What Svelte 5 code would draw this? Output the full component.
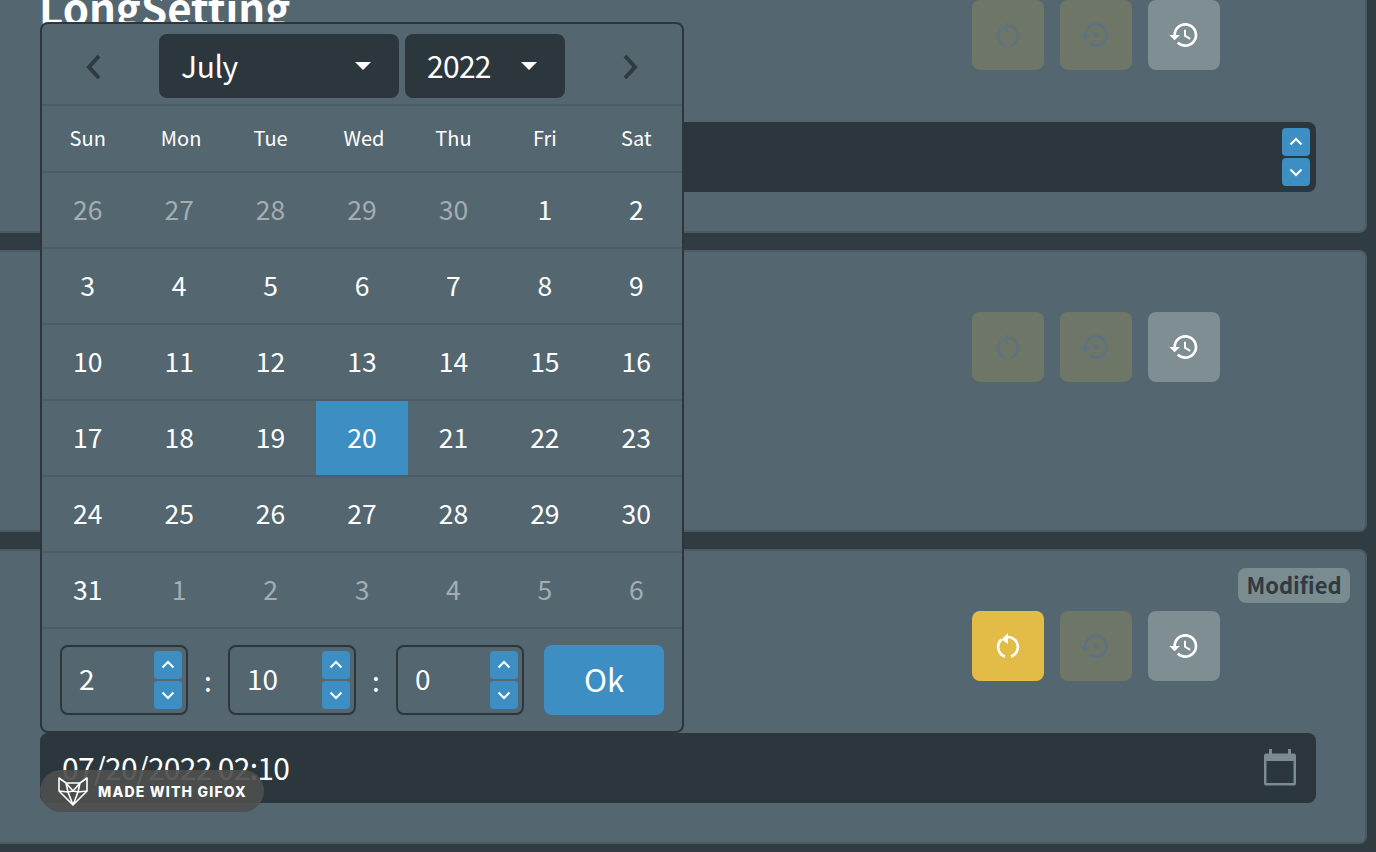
<script lang="ts">
	const weekdays = ['Sun', 'Mon', 'Tue', 'Wed', 'Thu', 'Fri', 'Sat'];

	// muted = day of a neighbouring month
	const days = [
		...[26, 27, 28, 29, 30].map((d) => ({ d, muted: true })),
		...Array.from({ length: 31 }, (_, i) => ({ d: i + 1, muted: false })),
		...[1, 2, 3, 4, 5, 6].map((d) => ({ d, muted: true }))
	];

	const time = [2, 10, 0];

	const restore = 'M14 12c0-1.1-.9-2-2-2s-2 .9-2 2 .9 2 2 2 2-.9 2-2zm-2-9c-4.97 0-9 4.03-9 9H0l4 4 4-4H5c0-3.87 3.13-7 7-7s7 3.13 7 7-3.13 7-7 7c-1.51 0-2.91-.49-4.06-1.3l-1.42 1.44C8.04 20.3 9.94 21 12 21c4.97 0 9-4.03 9-9s-4.03-9-9-9z';
	const history = 'M13 3c-4.97 0-9 4.03-9 9H1l3.89 3.89.07.14L9 12H6c0-3.87 3.13-7 7-7s7 3.13 7 7-3.13 7-7 7c-1.93 0-3.68-.79-4.94-2.06l-1.42 1.42C8.27 19.99 10.51 21 13 21c4.97 0 9-4.03 9-9s-4.03-9-9-9zm-1 5v5l4.28 2.54.72-1.21-3.5-2.08V8H12z';
</script>

{#snippet actions(modified: boolean)}
	<div class="actions">
		<button class="act" class:off={!modified} class:reset={modified}>
			<svg viewBox="0 0 32 32" width="32" height="32">
				<path d="M16 3 9.7 9.5 16 14z" />
				<path class="arc" d="M16 7a10 10 0 0 1 3 19.5M9.5 9.5A10 10 0 0 0 13 26.5" />
			</svg>
		</button>
		<button class="act off">
			<svg viewBox="0 0 24 24" width="32" height="32"><path d={restore} /></svg>
		</button>
		<button class="act hist">
			<svg viewBox="0 0 24 24" width="32" height="32"><path d={history} /></svg>
		</button>
	</div>
{/snippet}

{#snippet spin()}
	<div class="spin">
		<button aria-label="up"><svg viewBox="0 0 16 16" width="16" height="16"><path d="M2.5 10.5 8 5l5.5 5.5" /></svg></button>
		<button aria-label="down"><svg viewBox="0 0 16 16" width="16" height="16"><path d="M2.5 5.5 8 11l5.5-5.5" /></svg></button>
	</div>
{/snippet}

<div class="page">
	<section class="card">
		<div class="head">
			<h2>LongSetting</h2>
			{@render actions(false)}
		</div>
		<div class="field">{@render spin()}</div>
	</section>

	<section class="card short">
		<div class="head">
			<span></span>
			{@render actions(false)}
		</div>
	</section>

	<section class="card">
		<span class="badge">Modified</span>
		<div class="head">
			<span></span>
			{@render actions(true)}
		</div>
		<div class="field">
			<span class="value">07/20/2022 02:10</span>
			<svg class="cal" viewBox="0 0 34 38" width="34" height="38">
				<path d="M1 6.5q0-2 2-2h28q2 0 2 2v28q0 2-2 2H3q-2 0-2-2zM3.5 12v22h27V12z" fill-rule="evenodd" />
				<rect x="6" y="0" width="3" height="6" /><rect x="25" y="0" width="3" height="6" />
			</svg>
		</div>
	</section>

	<div class="picker">
		<div class="top">
			<svg class="nav" viewBox="0 0 18 26" width="18" height="26"><path d="M14 2 4 13l10 11" /></svg>
			<div class="selects">
				<div class="select month">July<i></i></div>
				<div class="select year">2022<i></i></div>
			</div>
			<svg class="nav" viewBox="0 0 18 26" width="18" height="26"><path d="M4 2l10 11L4 24" /></svg>
		</div>
		<div class="weekdays">
			{#each weekdays as w}<span>{w}</span>{/each}
		</div>
		<div class="days">
			{#each days as day}
				<span class:muted={day.muted} class:sel={!day.muted && day.d === 20}>{day.d}</span>
			{/each}
		</div>
		<div class="clock">
			{#each time as t, i}
				{#if i > 0}<span class="colon">:</span>{/if}
				<div class="num"><span class="n">{t}</span>{@render spin()}</div>
			{/each}
			<button class="ok">Ok</button>
		</div>
	</div>

	<div class="gifox">
		<svg viewBox="0 0 32 30" width="32" height="30">
			<path d="M2 2l7 5h14l7-5 0 13-14 14L2 15zM9 7l7 8 7-8M2 15l9 1 5-1 5 1 9-1M11 16l5 13 5-13M9 7l2 9M23 7l-2 9" />
		</svg>
		<span>MADE WITH GIFOX</span>
	</div>
</div>

<style>
	:global(body) {
		background: #303b42;
	}

	.page {
		position: relative;
		height: 852px;
		overflow: hidden;
		display: flex;
		flex-direction: column;
		gap: 17px;
		font-family: 'Noto Sans CJK SC', 'Noto Sans', sans-serif;
		color: #fff;
	}

	.page > :first-child {
		margin-top: -62px;
	}

	.card {
		position: relative;
		flex: none;
		margin: 0 9px 0 -10px;
		padding: 0 49px 41px 50px;
		background: #546670;
		border: solid #4b5b65;
		border-width: 2px 2px 2px 0;
		border-radius: 8px;
		box-sizing: border-box;
		height: 295px;
	}

	.card.short {
		height: 282px;
	}

	.head {
		display: flex;
		justify-content: space-between;
		align-items: flex-start;
		height: 182px;
	}

	h2 {
		margin: 42px 0 0 -1px;
		font-size: 42px;
		line-height: 50px;
		font-weight: 700;
	}

	.actions {
		display: flex;
		gap: 16px;
		margin: 60px 96px 0 0;
	}

	.act {
		width: 72px;
		height: 70px;
		border: 0;
		padding: 0;
		border-radius: 8px;
		display: flex;
		align-items: center;
		justify-content: center;
		color: #fff;
		fill: currentColor;
	}

	.act.off {
		background: #6e7667;
		color: #5f7280;
	}

	.act.reset {
		background: #e3bc47;
	}

	.act.hist {
		background: #7f8e92;
	}

	.arc {
		fill: none;
		stroke: currentColor;
		stroke-width: 2.6;
	}

	.field {
		height: 70px;
		background: #2b373c;
		border-radius: 8px;
		display: flex;
		align-items: center;
		justify-content: space-between;
		padding: 0 19px 0 22px;
		box-sizing: border-box;
	}

	.field .spin {
		margin: 0 -13px 0 auto;
	}

	.value {
		font-size: 30px;
		letter-spacing: -0.7px;
		margin-top: -2px;
	}

	.cal {
		fill: #7b8c90;
	}

	.spin {
		display: flex;
		flex-direction: column;
		gap: 2px;
	}

	.spin button {
		width: 28px;
		height: 28px;
		padding: 0;
		border: 0;
		border-radius: 4px;
		background: #3d8fc3;
		display: flex;
		align-items: center;
		justify-content: center;
	}

	.spin path {
		fill: none;
		stroke: #fff;
		stroke-width: 2;
	}

	.badge {
		position: absolute;
		top: 17px;
		right: 15px;
		width: 112px;
		height: 35px;
		border-radius: 8px;
		background: #7b8c90;
		color: #2f3a41;
		font-size: 22px;
		line-height: 33px;
		font-weight: 700;
		text-align: center;
	}

	.picker {
		position: absolute;
		left: 40px;
		top: 22px;
		width: 644px;
		height: 711px;
		box-sizing: border-box;
		background: #546670;
		border: 2px solid #2c363c;
		border-radius: 8px;
		display: flex;
		flex-direction: column;
	}

	.top {
		height: 82px;
		box-sizing: border-box;
		padding: 10px 43px 0;
		display: flex;
		justify-content: space-between;
		border-bottom: 2px solid #4c5d67;
	}

	.nav {
		margin-top: 20px;
		fill: none;
		stroke: #2f3a41;
		stroke-width: 4;
	}

	.selects {
		display: flex;
		gap: 6px;
	}

	.select {
		height: 64px;
		box-sizing: border-box;
		background: #2b373c;
		border-radius: 8px;
		font-size: 30px;
		letter-spacing: -0.4px;
		line-height: 64px;
		padding: 0 0 2px 22px;
		display: flex;
		justify-content: space-between;
		align-items: center;
	}

	.select i {
		width: 0;
		height: 0;
		border: 8px solid transparent;
		border-top: 8px solid #fff;
		border-bottom: 0;
		margin: 2px 28px 0 0;
	}

	.month {
		width: 240px;
	}

	.year {
		width: 160px;
		letter-spacing: -0.7px;
	}

	.weekdays {
		display: grid;
		grid-template-columns: repeat(7, 1fr);
		height: 67px;
		padding-bottom: 3px;
		align-items: center;
		text-align: center;
		font-size: 20px;
		border-bottom: 2px solid #4c5d67;
		box-sizing: border-box;
	}

	.weekdays span:nth-child(2),
	.weekdays span:nth-child(4) {
		padding-left: 4px;
	}

	.days {
		display: grid;
		grid-template-columns: repeat(7, 1fr);
		grid-auto-rows: 76px;
		font-size: 26.5px;
	}

	.days span {
		display: flex;
		align-items: center;
		justify-content: center;
		padding-bottom: 4px;
		border-bottom: 2px solid #4c5d67;
		box-sizing: border-box;
	}

	.days .muted {
		color: #a3adb2;
	}

	.days .sel {
		background: #3d8fc3;
		background-clip: padding-box;
	}

	.clock {
		flex: 1;
		display: flex;
		align-items: center;
		padding: 0 18px;
	}

	.num {
		width: 128px;
		height: 70px;
		box-sizing: border-box;
		border: 2px solid #2c363c;
		border-radius: 8px;
		display: flex;
		align-items: center;
		justify-content: space-between;
		padding: 0 4px 0 17px;
		font-size: 28px;
	}

	.n {
		margin-top: -4px;
	}

	.colon {
		width: 40px;
		text-align: center;
		font-size: 28px;
	}

	.ok {
		width: 120px;
		height: 70px;
		margin-left: 20px;
		padding: 0 0 4px;
		border: 0;
		border-radius: 8px;
		background: #3d8fc3;
		color: #fff;
		font: inherit;
		font-size: 31px;
	}

	.gifox {
		position: absolute;
		left: 40px;
		top: 770px;
		width: 224px;
		height: 42px;
		box-sizing: border-box;
		border-radius: 21px;
		background: rgba(78, 78, 78, 0.92);
		display: flex;
		align-items: center;
		gap: 9px;
		padding-left: 17px;
		font-family: Inter, sans-serif;
		font-weight: 800;
		font-size: 14px;
		letter-spacing: 1.2px;
	}

	.gifox path {
		fill: none;
		stroke: #fff;
		stroke-width: 1.6;
		stroke-linejoin: round;
	}
</style>
